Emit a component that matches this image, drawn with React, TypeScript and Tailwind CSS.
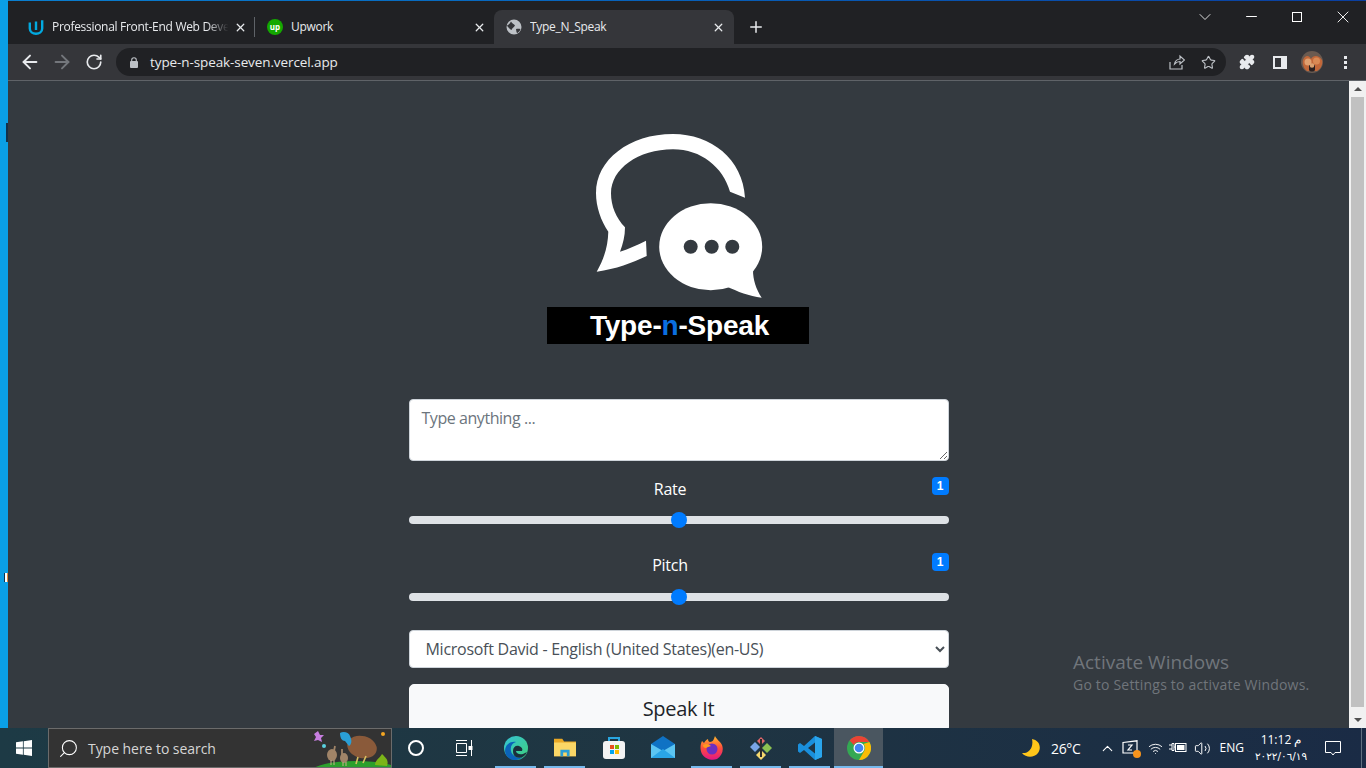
import React from 'react';
import { ArrowLeft, ArrowRight, ChevronDown, ChevronUp, Minus, Plus, Puzzle, RotateCw, Search, Star, Volume2, Wifi, X } from 'lucide-react';

const uiFont = 'font-["Open_Sans","Noto_Sans",sans-serif]';

const Tab: React.FC<{ icon: React.ReactNode; title: string; active?: boolean; fade?: boolean; divider?: boolean }> = ({ icon, title, active, fade, divider }) => (
  <div className={`relative flex h-[34px] items-center pl-3 ${active ? 'w-[240px] rounded-t-lg bg-[#35363a] pr-[9px]' : 'w-[239px] pr-2'}`}>
    <div className="flex h-4 w-4 shrink-0 items-center justify-center">{icon}</div>
    <span className={`ml-2 min-w-0 flex-1 overflow-hidden whitespace-nowrap text-[12px] tracking-[-0.3px] text-[#e8eaed] ${fade ? 'mr-[2px] [mask-image:linear-gradient(to_right,black_86%,transparent_98%)]' : ''}`}>{title}</span>
    <X size={13} strokeWidth={2.4} className="shrink-0 text-[#e8eaed]" />
    {divider && <div className="absolute right-0 top-[7px] h-5 w-px bg-[#5f6368]" />}
  </div>
);

const UdacityIcon = () => (
  <svg viewBox="0 0 16 16" className="h-4 w-4" fill="none" stroke="#02a9df" strokeWidth="2.4">
    <path d="M1.8 3.5V9.5C1.8 12.7 4.7 14.8 8 14.8C11.3 14.8 14.2 12.7 14.2 9.5V1.2" />
    <path d="M8 2.5V11" />
  </svg>
);

const GlobeIcon = () => (
  <svg viewBox="0 0 16 16" className="h-4 w-4">
    <circle cx="8" cy="8" r="7.5" fill="#bdc1c6" />
    <path d="M1 6.5C3 6 4 4 5 2.5C6 4.5 8 5 9 6.5C8 8.5 6 9 5.5 11C4 10 2.5 9 1 6.5ZM10 10C11.5 9.5 13 9.5 14.5 10C14 12 12.5 13.5 11 14.3C10.5 13 10 11.5 10 10Z" fill="#35363a" />
  </svg>
);

const ChatLogo = () => (
  <svg viewBox="0 0 167 164" className="h-[164px] w-[167px]">
    <path fill="#fff" d="M149 63.7C147 25 115 0 77 0C33 0 0 26 0 59C0 73 5 87 12.3 97.7C12 112 8 125 .7 137.7C20 135 36 129 50.7 122L50 106.7C41 111 33 115 24 117.7C27 110 29 102 29 93.3C20 84 15 72 15 59.3C15 35 42 15.3 77 15.3C105 15.3 127 33 134 57.7Z" />
    <ellipse cx="114.7" cy="112.7" rx="51.5" ry="43.5" fill="#fff" />
    <path fill="#fff" d="M157 136C157 146 160 155 165.7 163.7C153 162 142 158 130 152Z" />
    <circle cx="94.7" cy="112.7" r="7" fill="#343a40" />
    <circle cx="115.7" cy="112.7" r="7" fill="#343a40" />
    <circle cx="136.3" cy="112.7" r="7" fill="#343a40" />
  </svg>
);

const RangeRow: React.FC<{ label: string; className: string }> = ({ label, className }) => (
  <>
    <div className={`flex items-start ${className}`}>
      <span className="h-6 flex-1 text-center text-[16px] leading-6 tracking-[-0.27px] text-white">{label}</span>
      <span className="flex h-[18px] w-[17px] items-center justify-center rounded bg-[#007bff] font-['Liberation_Sans',sans-serif] text-[12px] font-bold text-white">1</span>
    </div>
    <input
      type="range"
      min={0}
      max={2}
      step={0.1}
      defaultValue={1}
      className="block h-4 w-full appearance-none bg-transparent [&::-webkit-slider-runnable-track]:h-2 [&::-webkit-slider-runnable-track]:rounded-full [&::-webkit-slider-runnable-track]:bg-[#dee2e6] [&::-webkit-slider-thumb]:-mt-1 [&::-webkit-slider-thumb]:h-4 [&::-webkit-slider-thumb]:w-4 [&::-webkit-slider-thumb]:appearance-none [&::-webkit-slider-thumb]:rounded-full [&::-webkit-slider-thumb]:bg-[#007bff]"
    />
  </>
);

const TaskIcon: React.FC<{ children: React.ReactNode; on?: boolean; active?: boolean }> = ({ children, on, active }) => (
  <div className={`relative flex h-10 w-[49px] shrink-0 items-center justify-center ${active ? 'bg-[#4a5660]' : ''}`}>
    {children}
    {on && <div className={`absolute bottom-0 h-[2px] bg-[#76b9ed] ${active ? 'left-0 right-0' : 'left-1 right-1'}`} />}
  </div>
);

const SearchArt = () => (
  <svg viewBox="0 0 80 40" className="absolute bottom-0 right-0 h-10 w-20">
    <ellipse cx="45" cy="44" rx="44" ry="10" fill="#2ca02c" />
    <ellipse cx="51" cy="20" rx="15" ry="11" fill="#8a5a3a" transform="rotate(15 51 20)" />
    <path d="M29 6C32 4 38 5 39 9C41 13 41 17 38 19L34 14C31 14 29 11 29 6Z" fill="#2a9fd6" />
    <path d="M47 30L45 37M55 29L52 36" stroke="#d8c060" strokeWidth="1.6" />
    <ellipse cx="21" cy="28" rx="5" ry="6" fill="#a08468" />
    <ellipse cx="33" cy="31" rx="4" ry="5" fill="#a08468" />
    <path d="M23 24L24 19M31 28L31 22" stroke="#a08468" strokeWidth="1.8" />
    <path d="M20 33V38M23 33V38M32 35V39M35 35V39" stroke="#c9b08a" strokeWidth="1" />
    <path d="M64 38C64 33 69 31 71 27C75 31 78 33 76 39Z" fill="#7cb518" />
    <path d="M7 4L9 8L13 8L10 11L11 15L7 13L3 14L5 10L3 7Z" fill="#c77ee0" />
    <circle cx="13" cy="19" r="2" fill="#5ad0e0" />
    <circle cx="72" cy="7" r="2" fill="#f5a623" />
  </svg>
);

const TaskBar = () => (
  <div className={`flex h-10 shrink-0 items-center bg-gradient-to-r from-[#1d3a45] via-[#1f3542] to-[#1a2b45] ${uiFont}`}>
    <div className="flex h-10 w-12 shrink-0 items-center justify-center">
      <svg viewBox="0 0 16 16" className="h-4 w-4" fill="#fff">
        <path d="M0 2.3 6.9 1.3V7.6H0ZM7.7 1.2 16 0V7.6H7.7ZM0 8.4H6.9V14.7L0 13.7ZM7.7 8.4H16V16L7.7 14.8Z" />
      </svg>
    </div>
    <div className="relative flex h-10 w-[344px] shrink-0 items-center overflow-hidden border border-[#6b6b6b] bg-[#333] pl-[9px]">
      <Search size={21} strokeWidth={1.2} className="-scale-x-100 text-white" />
      <span className="ml-[9px] text-[14px] tracking-[-0.05px] text-[#d6d6d6]">Type here to search</span>
      <SearchArt />
    </div>
    <div className="flex h-10 w-12 shrink-0 items-center justify-center">
      <div className="h-4 w-4 rounded-full border-2 border-white" />
    </div>
    <div className="flex h-10 w-12 shrink-0 items-center justify-center">
      <svg viewBox="0 0 18 16" className="h-4 w-[18px]" fill="none" stroke="#fff" strokeWidth="1">
        <path d="M1 .5H12M1 15.5H12M1.5 3.5H11.5V12.5H1.5ZM16.5 0V6M16.5 10V16" />
        <rect x="14" y="6.5" width="3" height="3" fill="#fff" />
      </svg>
    </div>
    <div className="w-[3px] shrink-0" />
    <TaskIcon on>
      <svg viewBox="0 0 24 24" className="h-6 w-6">
        <defs>
          <linearGradient id="edge" x1="0" y1="0" x2="1" y2="1"><stop offset="0" stopColor="#36c3d6" /><stop offset="1" stopColor="#3ed07a" /></linearGradient>
        </defs>
        <circle cx="12" cy="12" r="12" fill="url(#edge)" />
        <path d="M1 15C1 8 7 5 12 6C8 7 6 11 7 15C8 20 14 23 19 21C16 24 10 25 6 23C3 21 1 18 1 15Z" fill="#0b63b8" />
        <path d="M9 15C9 11 12 9 15 10C18 11 19 13 18 15H12C12 17 15 19 19 18L23 16C21 21 16 23 12 21C10 20 9 18 9 15Z" fill="#1b2f3c" />
      </svg>
    </TaskIcon>
    <TaskIcon on>
      <svg viewBox="0 0 24 24" className="h-[22px] w-[22px]">
        <path d="M0 2H9L11 5H24V21H0Z" fill="#e9a825" />
        <path d="M0 6H24V21H0Z" fill="#fbd766" />
        <path d="M7 21V14H17V21H14V17H10V21Z" fill="#2a9fd6" />
      </svg>
    </TaskIcon>
    <TaskIcon>
      <svg viewBox="0 0 24 24" className="h-6 w-6">
        <path d="M7 5V2H17V5" fill="none" stroke="#29a6e0" strokeWidth="2" />
        <rect x="1" y="5" width="22" height="18" rx="3" fill="#f3f3f3" />
        <rect x="8" y="9" width="4" height="4" fill="#e8501f" />
        <rect x="13" y="9" width="4" height="4" fill="#7fba00" />
        <rect x="8" y="14" width="4" height="4" fill="#00a4ef" />
        <rect x="13" y="14" width="4" height="4" fill="#ffb900" />
      </svg>
    </TaskIcon>
    <TaskIcon>
      <svg viewBox="0 0 24 24" className="h-6 w-6">
        <path d="M0 8L12 0L24 8V22H0Z" fill="#0f72c4" />
        <path d="M0 8L12 15L24 8V22H0Z" fill="#5cc5f2" />
        <path d="M0 22L12 13L24 22Z" fill="#2aa5e6" />
      </svg>
    </TaskIcon>
    <TaskIcon on>
      <svg viewBox="0 0 24 24" className="h-6 w-6">
        <defs>
          <linearGradient id="fox" x1="0" y1="0" x2="0" y2="1"><stop offset="0" stopColor="#ffb92e" /><stop offset=".5" stopColor="#ff4f3a" /><stop offset="1" stopColor="#e31587" /></linearGradient>
        </defs>
        <path d="M15 0C16 3 20 5 22 9C24 14 22 20 17 23C12 25 5 23 2 18C0 14 0 9 2 5L4 7C5 5 6 4 8 3C8 5 9 6 10 6C13 6 14 3 15 0Z" fill="url(#fox)" />
        <circle cx="12" cy="13" r="5.5" fill="#6c2fc0" />
        <path d="M3 9C6 7 9 8 11 10C9 11 7 11 6 12C4 12 3 11 3 9Z" fill="#ff9a1f" />
      </svg>
    </TaskIcon>
    <TaskIcon on>
      <svg viewBox="0 0 24 24" className="h-6 w-6">
        <path d="M12 1L16 5L12 9L8 5Z" fill="#e0666c" />
        <path d="M6 6L11 11L6 16L1 11Z" fill="#7aa5e8" />
        <path d="M18 7L23 12L18 17L13 12Z" fill="#8cc152" />
        <path d="M12 14L17 19L12 24L7 19Z" fill="#f5d76e" />
        <path d="M11 3H13V21H11Z" fill="#2b2b2b" />
      </svg>
    </TaskIcon>
    <TaskIcon on>
      <svg viewBox="0 0 24 24" className="h-6 w-6">
        <path d="M17 0L24 3V21L17 24L6 14L2 17L0 15.5V8.5L2 7L6 10ZM17 6.5L10 12L17 17.5Z" fill="#1a8fdc" />
        <path d="M17 0L24 3V21L17 24Z" fill="#2aa5ec" />
      </svg>
    </TaskIcon>
    <TaskIcon on active>
      <svg viewBox="0 0 24 24" className="h-6 w-6">
        <circle cx="12" cy="12" r="12" fill="#34a853" />
        <path d="M12 0A12 12 0 0 1 22.4 6H12A6 6 0 0 0 6.8 9L2.6 4.5A12 12 0 0 1 12 0Z" fill="#ea4335" />
        <path d="M22.4 6A12 12 0 0 1 12 24L17.2 15A6 6 0 0 0 16.5 8Z" fill="#fbbc05" />
        <circle cx="12" cy="12" r="5.5" fill="#fff" />
        <circle cx="12" cy="12" r="4.3" fill="#4285f4" />
      </svg>
    </TaskIcon>
    <div className="ml-auto flex h-10 items-center text-white">
      <svg viewBox="0 0 20 20" className="mr-[10px] h-5 w-5">
        <path d="M11 1C18 2 21 9 17 15C13 20 5 20 1 15C7 16 13 10 11 1Z" fill="#ffc61a" />
      </svg>
      <span className="mr-[18px] text-[14px] tracking-[-0.3px]">26°C</span>
      <ChevronUp size={17} strokeWidth={1.5} className="mr-[6px]" />
      <div className="relative mr-[10px]">
        <svg viewBox="0 0 16 16" className="h-4 w-4" fill="none" stroke="#fff" strokeWidth="1.2"><path d="M1 2.5L15 .8V13H1ZM6 5H10L6 10H10" /></svg>
        <div className="absolute -bottom-[2px] -right-[3px] h-2 w-2 rounded-full bg-[#f7941d]" />
      </div>
      <Wifi size={15} strokeWidth={1.5} className="mr-[6px]" />
      <svg viewBox="0 0 18 12" className="mr-[7px] h-3 w-[18px]" fill="none" stroke="#fff"><path d="M0 3H3M0 7H3M3 1.5V8.5H5V1.5ZM5 5H6" /><rect x="6.5" y="1.5" width="10.5" height="8" /><rect x="8" y="3" width="7.5" height="5" fill="#fff" stroke="none" /></svg>
      <Volume2 size={17} strokeWidth={1.4} className="mr-[9px]" />
      <span className="mr-[9px] text-[12px]">ENG</span>
      <div className="mr-[16px] flex w-[56px] flex-col items-center text-[12px] leading-[17px]">
        <span>11:12 م</span>
        <span className="font-['DejaVu_Sans',sans-serif] text-[10.5px]">٢٠٢٢/٠٦/١٩</span>
      </div>
      <svg viewBox="0 0 16 16" className="mr-5 h-4 w-4" fill="none" stroke="#fff"><path d="M.5 1.5H15.5V12.5H10L8 15L6 12.5H.5Z" /></svg>
      <div className="h-10 w-[5px] border-l border-[#5f7080]" />
    </div>
  </div>
);

const App: React.FC = () => (
  <div className={`relative flex h-[768px] w-[1366px] flex-col overflow-hidden bg-[#0a9fe6] ${uiFont}`}>
    {/* bits of the window behind, peeking out at the left edge */}
    <div className="absolute left-[6px] top-[123px] h-[19px] w-[2px] bg-[#12304a]" />
    <div className="absolute left-[4px] top-[573px] flex h-[9px] w-1">
      <div className="w-px bg-[#12304a]" />
      <div className="w-[2px] bg-white" />
      <div className="w-px bg-[#e08a3c]" />
    </div>
    <div className="flex min-h-0 flex-1 pl-2">
      <div className="flex min-w-0 flex-1 flex-col">
        <div className="h-px shrink-0 bg-gradient-to-r from-[#0a7fd0] to-[#0b3fa0]" />
        {/* chrome tab strip */}
        <div className="flex h-[43px] shrink-0 items-end bg-[#202124] pl-2">
          <Tab icon={<UdacityIcon />} title="Professional Front-End Web Deve" fade divider />
          <Tab
            icon={<div className="flex h-4 w-4 items-center justify-center rounded-full bg-[#14a800] text-[8px] font-bold text-white">up</div>}
            title="Upwork"
          />
          <Tab icon={<GlobeIcon />} title="Type_N_Speak" active />
          <div className="ml-2 flex h-[34px] w-7 items-center justify-center">
            <Plus size={18} strokeWidth={2} className="text-[#e8eaed]" />
          </div>
          <div className="ml-auto flex self-start text-white">
            <div className="flex h-[31px] w-[46px] items-center justify-center"><ChevronDown size={20} strokeWidth={1} /></div>
            <div className="flex h-[31px] w-[46px] items-center justify-center"><Minus size={17} strokeWidth={1.4} /></div>
            <div className="flex h-[31px] w-[46px] items-center justify-center"><div className="h-[10px] w-[10px] border border-white" /></div>
            <div className="flex h-[31px] w-[46px] items-center justify-center"><X size={20} strokeWidth={1.1} /></div>
          </div>
        </div>

        {/* chrome toolbar */}
        <div className="flex h-[37px] shrink-0 items-start border-b border-[#5f6368] bg-[#35363a] pl-[6px] pr-[5px] pt-1">
          <div className="flex h-7 w-8 items-center justify-center"><ArrowLeft size={22} strokeWidth={2.1} className="text-[#e8eaed]" /></div>
          <div className="flex h-7 w-8 items-center justify-center"><ArrowRight size={22} strokeWidth={2.1} className="text-[#74777c]" /></div>
          <div className="flex h-7 w-8 items-center justify-center"><RotateCw size={18} strokeWidth={2.2} className="text-[#e8eaed]" /></div>
          <div className="ml-[6px] flex h-7 min-w-0 flex-1 items-center rounded-full bg-[#202124] pl-[14px] pr-[10px]">
            <svg viewBox="0 0 8 11" className="h-[11px] w-2">
              <rect x="0" y="4" width="8" height="7" rx="1" fill="#bdc1c6" />
              <path d="M1.7 4.5V3A2.3 2.3 0 0 1 6.3 3V4.5" fill="none" stroke="#bdc1c6" strokeWidth="1.1" />
            </svg>
            <span className="ml-3 text-[13.5px] tracking-[-0.1px] text-[#e8eaed]">type-n-speak-seven.vercel.app</span>
            <svg viewBox="0 0 16 16" className="ml-auto h-4 w-4" fill="none" stroke="#bdc1c6" strokeWidth="1.2">
              <path d="M1 8V15H13V11M5.5 10C6 7 8.5 5 11 5V2L15.5 6L11 10V7.5C9 7.5 7 8.5 5.5 10Z" />
            </svg>
            <Star size={15} strokeWidth={1.8} className="ml-4 text-[#bdc1c6]" />
          </div>
          <div className="ml-[5px] flex h-7 w-8 items-center justify-center"><Puzzle size={16} fill="#e8eaed" className="text-[#e8eaed]" /></div>
          <div className="ml-px flex h-7 w-8 items-center justify-center">
            <div className="flex h-[13px] w-[14px] justify-end border-2 border-[#e8eaed] bg-[#35363a]"><div className="h-full w-[4px] bg-[#e8eaed]" /></div>
          </div>
          <div className="flex h-7 w-8 items-center justify-center">
            <svg viewBox="0 0 22 22" className="h-[22px] w-[22px]">
              <circle cx="11" cy="11" r="11" fill="#6a5a50" />
              <path d="M2 9C4 4 8 4 10 8C12 4 18 4 21 9C22 13 20 18 16 20H6C3 18 1 13 2 9Z" fill="#c2683a" />
              <circle cx="7" cy="11" r="3.5" fill="#e0a070" />
              <circle cx="15.5" cy="10" r="3.5" fill="#d98a55" />
              <path d="M8 14H14V19C13 21 9 21 8 19Z" fill="#2a2020" />
              <circle cx="11" cy="14.5" r="2.3" fill="#d8a070" />
            </svg>
          </div>
          <div className="ml-px flex h-7 w-8 flex-col items-center justify-center gap-[2px]">
            <div className="h-[3px] w-[3px] bg-[#e8eaed]" />
            <div className="h-[3px] w-[3px] bg-[#e8eaed]" />
            <div className="h-[3px] w-[3px] bg-[#e8eaed]" />
          </div>
        </div>

        {/* page and scrollbar */}
        <div className="flex min-h-0 flex-1">
          <div className="relative min-w-0 flex-1 overflow-hidden bg-[#343a40]">
            <div className="mx-auto flex w-[540px] flex-col">
              <div className="flex justify-center pl-[1px] pt-[53px]"><ChatLogo /></div>
              <div className="mx-auto mt-[9px] flex h-[37px] w-[262px] -translate-x-px items-center justify-center bg-black pl-[4px] font-['Liberation_Sans',sans-serif] text-[28px] font-bold tracking-[-0.2px] text-white">
                Type-<span className="text-[#0a6fe0]">n</span>-Speak
              </div>
              <textarea
                rows={2}
                placeholder="Type anything ..."
                className="mt-[55px] block h-[62px] w-full rounded border border-[#ced4da] bg-white px-3 py-[6px] text-[16px] leading-6 tracking-[-0.45px] text-[#495057] placeholder:text-[#6c757d]"
              />
              <RangeRow label="Rate" className="mt-4 mb-[11px]" />
              <RangeRow label="Pitch" className="mt-[25px] mb-3" />
              <select className="mt-[25px] block h-[38px] w-full rounded border border-[#ced4da] bg-white px-3 text-[16px] tracking-[-0.27px] text-[#495057]">
                <option>Microsoft David - English (United States)(en-US)</option>
              </select>
              <button className="mt-4 block h-12 w-full shrink-0 rounded-[5px] border border-[#f8f9fa] bg-[#f8f9fa] pt-[2px] text-[20px] tracking-[-0.3px] text-[#212529]">Speak It</button>
            </div>
            <div className="absolute left-[1065px] top-[568px] text-[#70757b]">
              <div className="text-[19px] leading-[26px]">Activate Windows</div>
              <div className="text-[14px] leading-[20px] tracking-[0.2px]">Go to Settings to activate Windows.</div>
            </div>
          </div>
          <div className="flex w-[17px] shrink-0 flex-col items-center bg-[#f1f1f1]">
            <div className="flex h-4 shrink-0 items-center justify-center">
              <div className="h-0 w-0 border-x-[4px] border-b-[4px] border-x-transparent border-b-[#505050]" />
            </div>
            <div className="h-[610px] w-[13px] shrink-0 bg-[#c1c1c1]" />
            <div className="mt-auto flex h-4 shrink-0 items-center justify-center">
              <div className="h-0 w-0 border-x-[4px] border-t-[4px] border-x-transparent border-t-[#505050]" />
            </div>
          </div>
        </div>
      </div>
    </div>
    <TaskBar />
  </div>
);

export default App;
